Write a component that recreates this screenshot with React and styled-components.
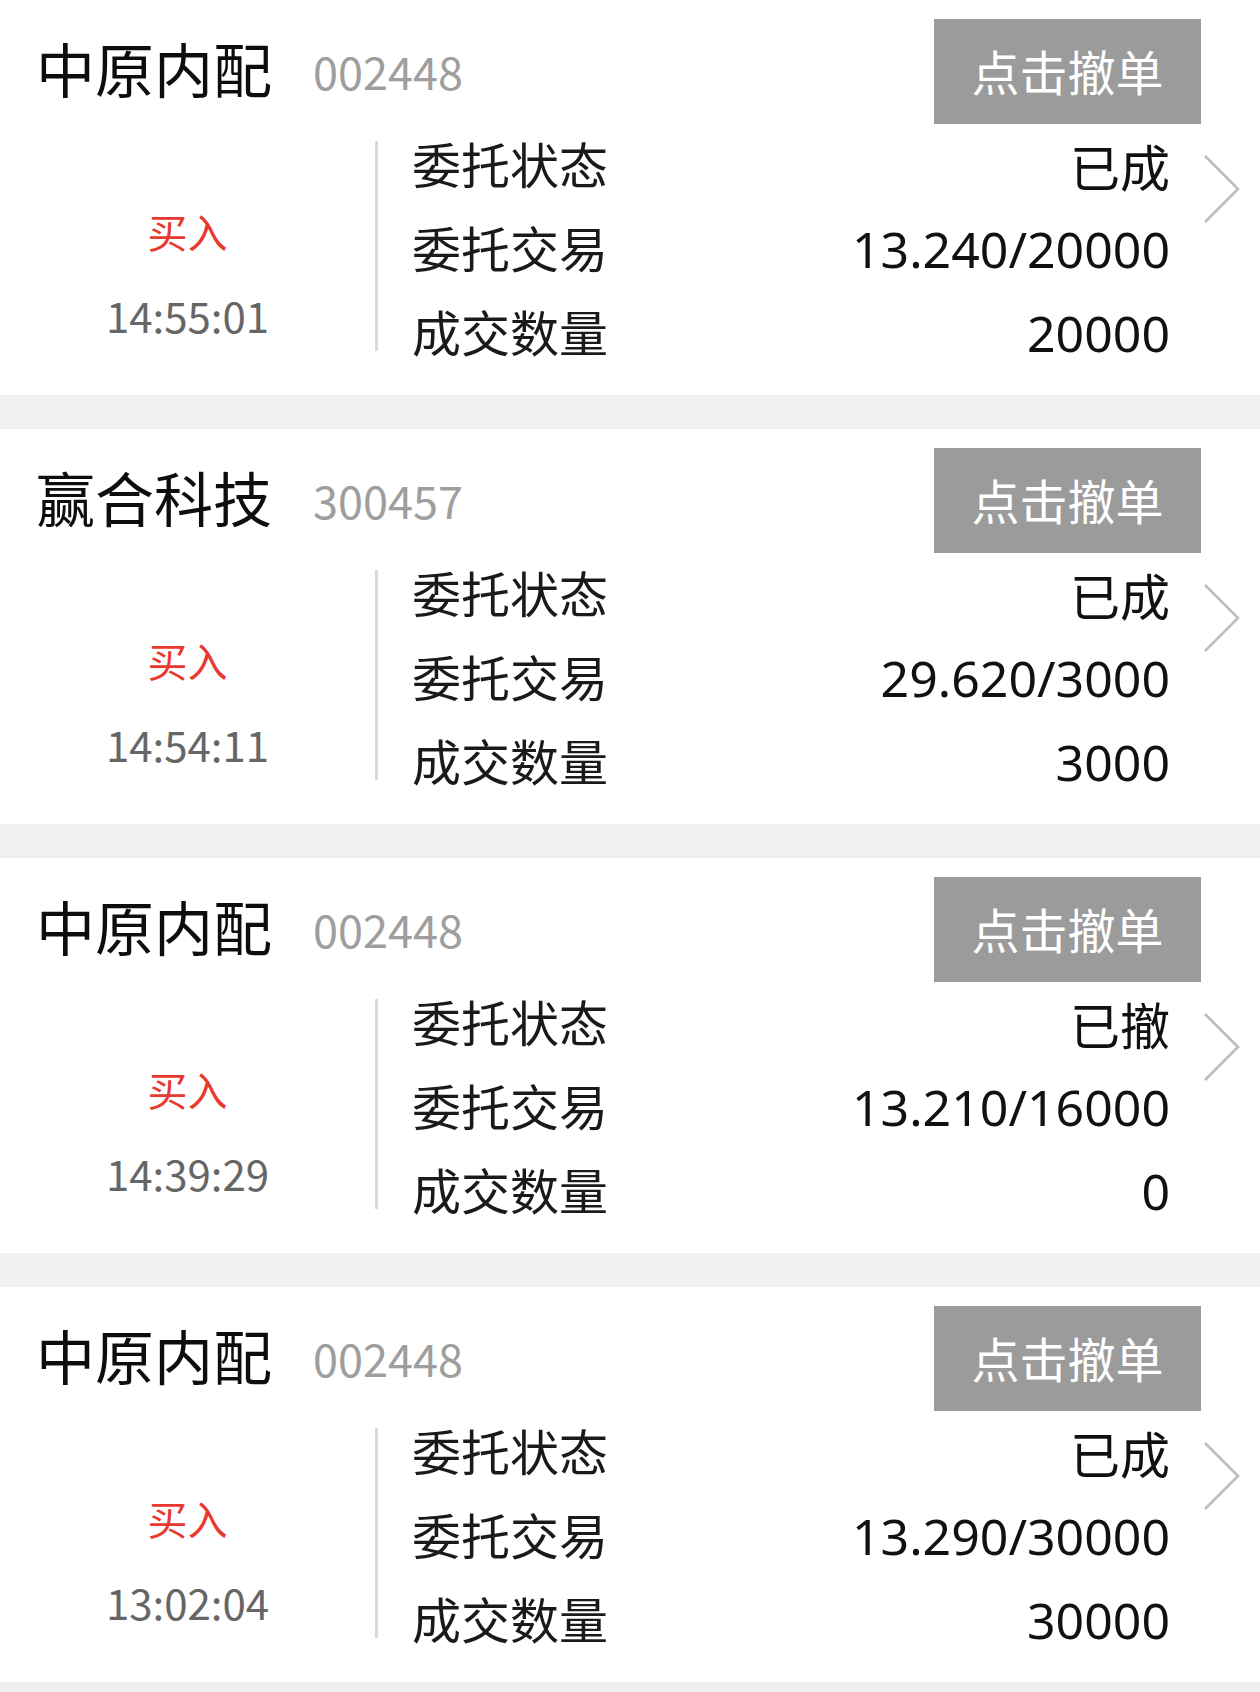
import React from 'react';
import styled, { createGlobalStyle } from 'styled-components';

const orders = [
  { name: '中原内配', code: '002448', side: '买入', time: '14:55:01', status: '已成', trade: '13.240/20000', qty: '20000' },
  { name: '赢合科技', code: '300457', side: '买入', time: '14:54:11', status: '已成', trade: '29.620/3000', qty: '3000' },
  { name: '中原内配', code: '002448', side: '买入', time: '14:39:29', status: '已撤', trade: '13.210/16000', qty: '0' },
  { name: '中原内配', code: '002448', side: '买入', time: '13:02:04', status: '已成', trade: '13.290/30000', qty: '30000' },
];

const GlobalStyle = createGlobalStyle`
  html, body {
    margin: 0;
    padding: 0;
    background: #f0f0f0;
  }
  body {
    font-family: "Noto Sans CJK SC", "Noto Sans", sans-serif;
  }
`;

const Chevron = () => (
  <svg width="36" height="68" viewBox="0 0 36 68">
    <polyline points="1,1 34,34 1,67" fill="none" stroke="#bdbdbd" strokeWidth="2.6" />
  </svg>
);

const OrderCard = ({ order }) => (
  <Card>
    <TitleRow>
      <StockName>{order.name}</StockName>
      <StockCode>{order.code}</StockCode>
      <CancelButton>点击撤单</CancelButton>
    </TitleRow>

    <Body>
      <SideCol>
        <Side>{order.side}</Side>
        <Time>{order.time}</Time>
      </SideCol>

      <Divider />

      <Details>
        <Row>
          <Label>委托状态</Label>
          <Value>{order.status}</Value>
        </Row>
        <Row>
          <Label>委托交易</Label>
          <Value>{order.trade}</Value>
        </Row>
        <Row>
          <Label>成交数量</Label>
          <Value>{order.qty}</Value>
        </Row>
      </Details>

      <Arrow>
        <Chevron />
      </Arrow>
    </Body>
  </Card>
);

const App = () => {
  return (
    <Page>
      <GlobalStyle />
      {orders.map((o, i) => (
        <OrderCard key={i} order={o} />
      ))}
    </Page>
  );
};

const Page = styled.div`
  width: 1260px;
  display: flex;
  flex-direction: column;
  gap: 34px;
  background: #f0f0f0;
`;

const Card = styled.div`
  background: #fff;
  padding: 19px 0 19px;
`;

const TitleRow = styled.div`
  display: flex;
  align-items: center;
  height: 105px;
`;

const StockName = styled.span`
  font-size: 59px;
  color: #0d0d0d;
  padding-left: 36px;
  line-height: 1;
  margin-bottom: 9px;
`;

const StockCode = styled.span`
  font-size: 45px;
  color: #9e9e9e;
  margin-left: 41px;
  line-height: 1;
  margin-bottom: 3px;
`;

const CancelButton = styled.div`
  margin-left: auto;
  margin-right: 59px;
  width: 267px;
  height: 105px;
  background: #9b9b9b;
  color: #fff;
  font-size: 48px;
  display: flex;
  align-items: center;
  justify-content: center;
  padding-bottom: 4px;
  box-sizing: border-box;
`;

const Body = styled.div`
  display: flex;
  height: 252px;
`;

const SideCol = styled.div`
  width: 375px;
  display: flex;
  flex-direction: column;
  align-items: center;
  padding-top: 65px;
`;

const Side = styled.div`
  font-size: 40px;
  line-height: 84px;
  color: #e8392f;
`;

const Time = styled.div`
  font-size: 42px;
  line-height: 84px;
  color: #666;
`;

const Divider = styled.div`
  width: 3px;
  background: #dadada;
  margin: 17px 0 25px;
`;

const Details = styled.div`
  flex: 1;
  display: flex;
  flex-direction: column;
  padding-left: 34px;
  margin-top: -4px;
`;

const Row = styled.div`
  height: 84px;
  display: flex;
  align-items: center;
  justify-content: space-between;
`;

const Label = styled.span`
  font-size: 49px;
  color: #1a1a1a;
`;

const Value = styled.span`
  font-family: "Noto Sans", "Noto Sans CJK SC", sans-serif;
  font-size: 50px;
  color: #111;
  padding-top: 6px;
`;

const Arrow = styled.div`
  width: 90px;
  padding-left: 34px;
  padding-top: 31px;
  box-sizing: border-box;
`;

export default App;
